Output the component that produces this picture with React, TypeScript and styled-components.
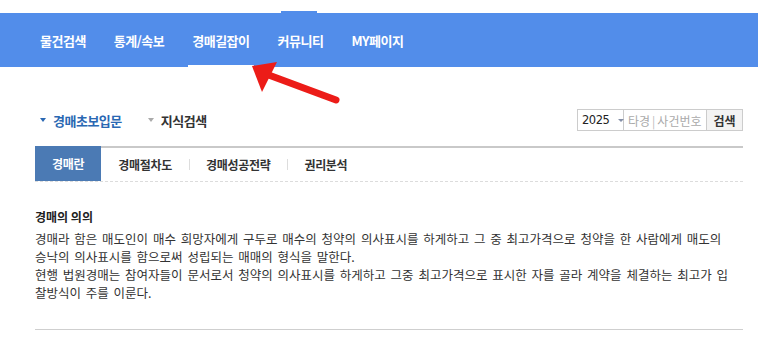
import React from 'react'
import styled, { createGlobalStyle } from 'styled-components';

const GlobalStyles = createGlobalStyle`
    html, body {
        margin: 0;
        padding: 0;
        background: #fff;
        font-family: "Noto Sans CJK KR", "Noto Sans", sans-serif;
        color: #333;
    }
`;

const Page = styled.div`
    position: relative;
    width: 758px;
    height: 339px;
    overflow: hidden;
    padding-top: 13px;
    box-sizing: border-box;
`;

const NavBar = styled.nav`
    position: relative;
    height: 54px;
    background-color: #528dea;
    display: flex;
    align-items: stretch;
    gap: 20px;
    padding-left: 36px;
`;

// the little raised bump on top of the bar
const NavBump = styled.span`
    position: absolute;
    top: -2px;
    left: 281px;
    width: 36px;
    height: 2px;
    background-color: #528dea;
`;

const NavItem = styled.a<{ $active?: boolean }>`
    position: relative;
    display: flex;
    align-items: center;
    padding: 0 4px;
    color: #fff;
    font-size: 13px;
    font-weight: 700;
    letter-spacing: -0.5px;
    text-decoration: none;

    &::after {
        content: '';
        display: ${p => (p.$active ? 'block' : 'none')};
        position: absolute;
        left: 0;
        right: 0;
        bottom: 0;
        height: 2px;
        background: #fff;
    }
`;

const Arrow = styled.svg`
    position: absolute;
    left: 0;
    top: 0;
    pointer-events: none;
`;

const Content = styled.div`
    margin: 0 15px 0 35px;
`;

const SubHeader = styled.div`
    display: flex;
    align-items: center;
    justify-content: space-between;
    height: 22px;
    margin-top: 42px;
`;

const Categories = styled.div`
    display: flex;
    align-items: center;
    gap: 26px;
    padding-left: 5px;
`;

const Category = styled.span<{ $active?: boolean }>`
    display: flex;
    align-items: center;
    gap: 7px;
    font-size: 13px;
    font-weight: 700;
    letter-spacing: -0.5px;
    color: ${p => (p.$active ? '#2a68b3' : '#333')};

    &::before {
        content: '';
        border-left: 3px solid transparent;
        border-right: 3px solid transparent;
        border-top: 4px solid ${p => (p.$active ? '#2a68b3' : '#aaa')};
    }
`;

const SearchBox = styled.div`
    display: flex;
    height: 22px;
    border: 1px solid #ccc;
    box-sizing: border-box;
    font-size: 12px;
    white-space: nowrap;
`;

const YearSelect = styled.div`
    display: flex;
    align-items: center;
    gap: 9px;
    width: 46px;
    padding-left: 4px;
    box-sizing: border-box;
    border-right: 1px solid #ccc;
    font-family: "DejaVu Sans", sans-serif;
    font-size: 11.5px;
    letter-spacing: -0.5px;
    color: #222;

    &::after {
        content: '';
        border-left: 3px solid transparent;
        border-right: 3px solid transparent;
        border-top: 3px solid #8590a8;
    }
`;

const CaseInput = styled.div`
    display: flex;
    align-items: center;
    width: 83px;
    padding-left: 4px;
    box-sizing: border-box;
    border-right: 1px solid #ccc;
    color: #aaa;
    overflow: hidden;
`;

const Bar = styled.span`
    margin: 0 2px;
    color: #bbb;
`;

const SearchButton = styled.div`
    display: flex;
    align-items: center;
    justify-content: center;
    width: 35px;
    background: #f3f3f3;
    font-weight: 700;
    color: #333;
`;

const TabBar = styled.div`
    display: flex;
    height: 33px;
    margin-top: 15px;
    border-top: 2px solid #c9c9c9;
    border-bottom: 1px dashed #dcdcdc;
`;

const Tab = styled.div<{ $active?: boolean; $divider?: boolean }>`
    position: relative;
    display: flex;
    align-items: center;
    padding: 0 17px;
    margin-top: ${p => (p.$active ? '-2px' : '0')};
    height: ${p => (p.$active ? '35px' : '33px')};
    font-size: 12px;
    font-weight: 700;
    letter-spacing: -0.3px;
    color: ${p => (p.$active ? '#fff' : '#333')};
    background: ${p => (p.$active ? '#4b7ab4' : 'transparent')};

    &::before {
        content: '';
        display: ${p => (p.$divider ? 'block' : 'none')};
        position: absolute;
        left: 0;
        top: 11px;
        width: 1px;
        height: 11px;
        background: #ddd;
    }
`;

const Article = styled.section`
    padding-top: 26px;
    padding-bottom: 27px;
    border-bottom: 1px solid #cfcfcf;
`;

const Title = styled.h3`
    margin: 0 0 4px;
    font-size: 12px;
    font-weight: 700;
    line-height: 18px;
    color: #222;
`;

const Body = styled.p`
    margin: 0;
    font-size: 12.5px;
    line-height: 18px;
    word-spacing: 2px;
    color: #333;
    white-space: nowrap;
`;

function App() {
    return (
        <>
            <GlobalStyles />
            <Page>
                <NavBar>
                    <NavBump />
                    <NavItem>물건검색</NavItem>
                    <NavItem>통계/속보</NavItem>
                    <NavItem $active>경매길잡이</NavItem>
                    <NavItem>커뮤니티</NavItem>
                    <NavItem>MY페이지</NavItem>
                </NavBar>

                <Content>
                    <SubHeader>
                        <Categories>
                            <Category $active>경매초보입문</Category>
                            <Category>지식검색</Category>
                        </Categories>
                        <SearchBox>
                            <YearSelect>2025</YearSelect>
                            <CaseInput>타경<Bar>|</Bar>사건번호</CaseInput>
                            <SearchButton>검색</SearchButton>
                        </SearchBox>
                    </SubHeader>

                    <TabBar>
                        <Tab $active>경매란</Tab>
                        <Tab>경매절차도</Tab>
                        <Tab $divider>경매성공전략</Tab>
                        <Tab $divider>권리분석</Tab>
                    </TabBar>

                    <Article>
                        <Title>경매의 의의</Title>
                        <Body>
                            경매라 함은 매도인이 매수 희망자에게 구두로 매수의 청약의 의사표시를 하게하고 그 중 최고가격으로 청약을 한 사람에게 매도의<br />
                            승낙의 의사표시를 함으로써 성립되는 매매의 형식을 말한다.<br />
                            현행 법원경매는 참여자들이 문서로서 청약의 의사표시를 하게하고 그중 최고가격으로 표시한 자를 골라 계약을 체결하는 최고가 입<br />
                            찰방식이 주를 이룬다.
                        </Body>
                    </Article>
                </Content>

                <Arrow width="758" height="339" viewBox="0 0 758 339">
                    <line x1="336" y1="100" x2="266" y2="74" stroke="#ec1c18" strokeWidth="7" strokeLinecap="round" />
                    <polygon points="252,66 262,92 277,62" fill="#ec1c18" />
                </Arrow>
            </Page>
        </>
    )
}

export default App;
